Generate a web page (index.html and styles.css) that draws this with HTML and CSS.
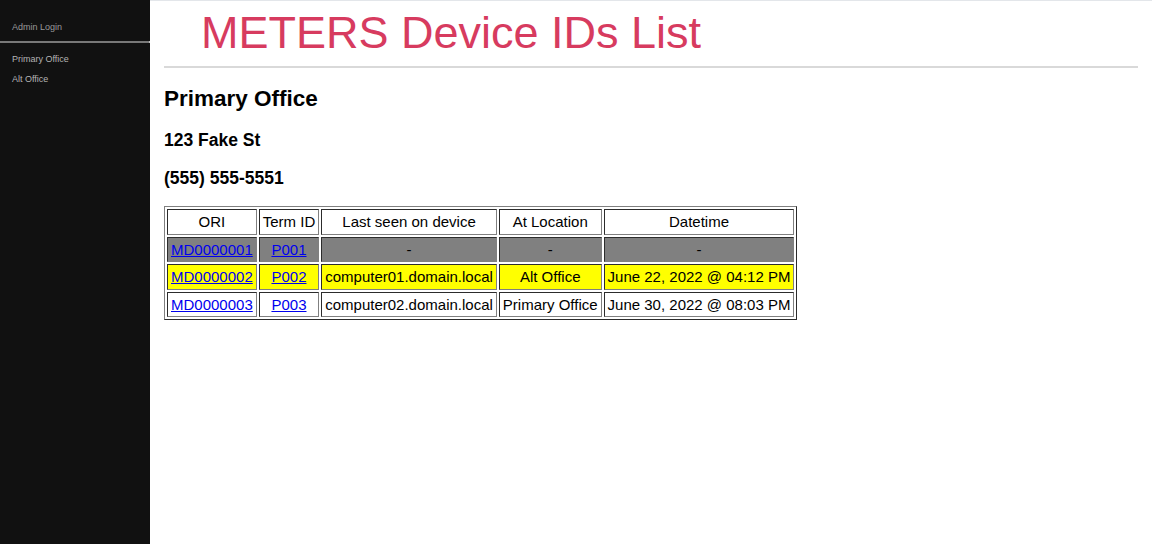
FILE: index.html
```html
<!DOCTYPE html>
<html>
<head>
<meta charset="utf-8">
<title>METERS Device IDs List</title>
<link rel="stylesheet" href="styles.css">
</head>
<body>
<div class="layout">
  <nav class="sidebar">
    <div class="sidebar-head">Admin Login</div>
    <div class="sidebar-rule"></div>
    <ul class="sidebar-links">
      <li><a href="#">Primary Office</a></li>
      <li><a href="#">Alt Office</a></li>
    </ul>
  </nav>
  <main class="main">
    <h1 class="title">METERS Device IDs List</h1>
    <div class="rule"></div>
    <h2 class="office">Primary Office</h2>
    <h3 class="info">123 Fake St</h3>
    <h3 class="info">(555) 555-5551</h3>
    <table class="devices">
      <tr>
        <td>ORI</td>
        <td>Term ID</td>
        <td>Last seen on device</td>
        <td>At Location</td>
        <td>Datetime</td>
      </tr>
      <tr class="row-gray">
        <td><a href="#">MD0000001</a></td>
        <td><a href="#">P001</a></td>
        <td>-</td>
        <td>-</td>
        <td>-</td>
      </tr>
      <tr class="row-yellow">
        <td><a href="#">MD0000002</a></td>
        <td><a href="#">P002</a></td>
        <td>computer01.domain.local</td>
        <td>Alt Office</td>
        <td>June 22, 2022 @ 04:12 PM</td>
      </tr>
      <tr>
        <td><a href="#">MD0000003</a></td>
        <td><a href="#">P003</a></td>
        <td>computer02.domain.local</td>
        <td>Primary Office</td>
        <td>June 30, 2022 @ 08:03 PM</td>
      </tr>
    </table>
  </main>
</div>
</body>
</html>
```
FILE: styles.css
```css
html, body {
  margin: 0;
  padding: 0;
  height: 100%;
}
body {
  font-family: "Liberation Sans", Arial, sans-serif;
  font-size: 15px;
  color: #000;
  background: #fff;
}
.layout {
  display: flex;
  min-height: 100vh;
}
.sidebar {
  width: 150px;
  flex: 0 0 150px;
  background: #111;
  font-size: 9px;
}
.sidebar-head {
  color: #999;
  padding: 22px 12px 0;
  height: 19px;
}
.sidebar-rule {
  height: 2px;
  background: #787878;
  border-right: 1px solid #bbb;
  margin-bottom: 11px;
}
.sidebar-links {
  list-style: none;
  margin: 0;
  padding: 0 12px;
}
.sidebar-links li {
  height: 20px;
}
.sidebar-links a {
  color: #b4b4b4;
  text-decoration: none;
}
.main {
  flex: 1;
  padding: 0 14px;
  border-top: 1px solid #e3e6ea;
}
.title {
  font-size: 45px;
  font-weight: normal;
  color: #d73b5f;
  margin: 6px 0 7px;
  padding-left: 37px;
}
.rule {
  height: 2px;
  background: #d9d9d9;
}
.office {
  font-size: 22.5px;
  margin: 18px 0;
}
.info {
  font-size: 17.5px;
  margin: 17px 0;
}
.devices {
  border: 1px outset #808080;
  border-spacing: 2px;
}
.devices td {
  border: 1px inset #808080;
  padding: 3px 3px 3.5px;
  text-align: center;
}
.devices a {
  color: #0000ee;
}
.row-gray td {
  background: #808080;
}
.row-yellow td {
  background: #ffff00;
}
```
